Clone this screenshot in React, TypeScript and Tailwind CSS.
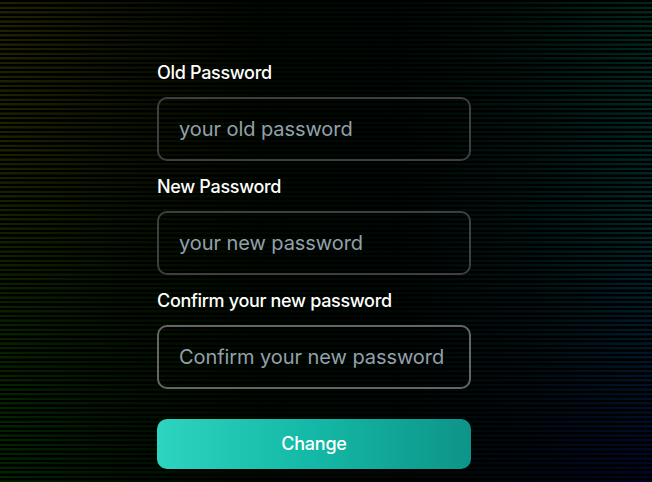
const fields = [
  { id: "old", label: "Old Password", placeholder: "your old password", border: "border-[#3f3f3f]" },
  { id: "new", label: "New Password", placeholder: "your new password", border: "border-[#3f3f3f]" },
  { id: "confirm", label: "Confirm your new password", placeholder: "Confirm your new password", border: "border-[#656565]" },
];

function Backdrop() {
  return (
    <div className="pointer-events-none absolute inset-0 -z-10 bg-black">
      <div className="absolute inset-0 bg-[linear-gradient(to_right,#020800,#000a00_35%,#000906_65%,#000807)]" />
      <div className="absolute inset-y-0 left-0 w-[260px] bg-[linear-gradient(to_bottom,#222200_0%,#1c2200_30%,#0a2200_60%,#002600_100%)] [mask-image:linear-gradient(to_right,#000,rgba(0,0,0,0.4)_50%,transparent)]" />
      <div className="absolute inset-y-0 right-0 w-[260px] bg-[linear-gradient(to_bottom,#00281c_0%,#002824_25%,#00262a_50%,#00182a_75%,#000628_100%)] [mask-image:linear-gradient(to_left,#000,rgba(0,0,0,0.35)_50%,transparent)]" />
      <div className="absolute inset-0 bg-[repeating-linear-gradient(to_bottom,#000_0px,#000_1.8px,transparent_2.3px,transparent_4px,#000_4.6px)]" />
    </div>
  );
}

export default function App() {
  return (
    <main className="relative isolate h-[482px] w-[652px] overflow-hidden bg-black font-[Inter,sans-serif]">
      <Backdrop />
      <form className="ml-[157px] flex w-[314px] flex-col pt-[59px]">
        {fields.map((f) => (
          <div key={f.id} className="mb-3 flex flex-col">
            <label htmlFor={f.id} className="mb-[11px] h-[27px] text-lg leading-[27px] font-medium tracking-[-0.32px] text-white">
              {f.label}
            </label>
            <input
              id={f.id}
              type="password"
              placeholder={f.placeholder}
              className={`h-16 w-full rounded-[10px] border-2 bg-transparent px-5 text-xl tracking-[-0.07px] text-white outline-none placeholder:text-[#94a0ab] ${f.border}`}
            />
          </div>
        ))}
        <button
          type="button"
          className="mt-[18px] h-[50px] rounded-[10px] bg-[linear-gradient(to_right,#2dd4bf,#14b8a6,#0d9488)] text-lg font-medium tracking-[-0.25px] text-white"
        >
          Change
        </button>
      </form>
    </main>
  );
}
